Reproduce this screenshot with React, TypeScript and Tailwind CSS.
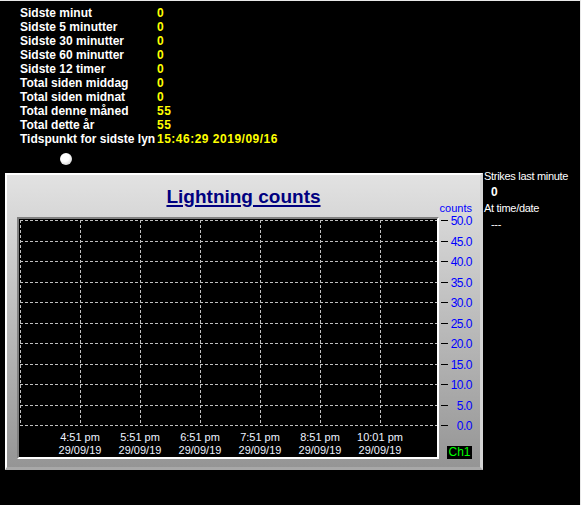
import React from "react";

const stats: [string, string][] = [
  ["Sidste minut", "0"],
  ["Sidste 5 minutter", "0"],
  ["Sidste 30 minutter", "0"],
  ["Sidste 60 minutter", "0"],
  ["Sidste 12 timer", "0"],
  ["Total siden middag", "0"],
  ["Total siden midnat", "0"],
  ["Total denne måned", "55"],
  ["Total dette år", "55"],
  ["Tidspunkt for sidste lyn", "15:46:29 2019/09/16"],
];

const times = ["4:51 pm", "5:51 pm", "6:51 pm", "7:51 pm", "8:51 pm", "10:01 pm"];
const yLabels = ["50.0", "45.0", "40.0", "35.0", "30.0", "25.0", "20.0", "15.0", "10.0", "5.0", "0.0"];

function Grid() {
  const h = Array.from({ length: 11 }, (_, i) => Math.round(1 + 20.5 * i) + 0.5);
  const v = Array.from({ length: 7 }, (_, j) => 1 + 60 * j + 0.5);
  return (
    <svg width={418} height={238} className="block">
      {h.map((y, i) => (
        <line key={"h" + i} x1={1} x2={418} y1={y} y2={y} stroke="#c0c0c0" strokeWidth={1} strokeDasharray="3 2" />
      ))}
      {v.map((x, j) => (
        <line key={"v" + j} x1={x} x2={x} y1={1} y2={207} stroke="#c0c0c0" strokeWidth={1} strokeDasharray="3 2" />
      ))}
      {times.map((t, k) => (
        <g key={t} fontFamily="'Liberation Sans', Arial, sans-serif" fontSize={11} fill="#eef2ff" textAnchor="middle">
          <text x={61 + 60 * k} y={222}>{t}</text>
          <text x={61 + 60 * k} y={235}>29/09/19</text>
        </g>
      ))}
    </svg>
  );
}

function Axis() {
  return (
    <svg width={41} height={259} className="block overflow-visible">
      <text x={33} y={3.7} fontFamily="'Liberation Sans', Arial, sans-serif" fontSize={11} fill="#0000ff" textAnchor="end">
        counts
      </text>
      {yLabels.map((l, i) => {
        const y = Math.round(12 + 20.5 * i) + 0.5;
        return (
          <g key={l}>
            <line x1={2} x2={9} y1={y} y2={y} stroke="#000" strokeWidth={1} />
            <text
              x={33}
              y={y + 4.6}
              fontFamily="'Liberation Sans', Arial, sans-serif"
              fontSize={12}
              letterSpacing={-0.5}
              fill="#0000ff"
              textAnchor="end"
            >
              {l}
            </text>
          </g>
        );
      })}
      <rect x={8} y={238} width={25} height={13} fill="#000" />
      <text x={20.5} y={248.3} fontFamily="'Liberation Sans', Arial, sans-serif" fontSize={12} fill="#00ff00" textAnchor="middle">
        Ch1
      </text>
    </svg>
  );
}

export default function App() {
  return (
    <div className="w-[581px] h-[505px] bg-[#e8e8e8] pt-[1px] overflow-hidden">
      <div className="w-[580px] h-[504px] bg-black pt-[5px] font-['Liberation_Sans',Arial,sans-serif]">
        <div className="pl-[20px] flex flex-col">
          {stats.map(([label, value]) => (
            <div key={label} className="flex text-[12px] leading-[14px] font-bold">
              <span className="w-[137px] text-white">{label}</span>
              <span className="text-[#ffff00] tracking-[0.5px]">{value}</span>
            </div>
          ))}
        </div>
        <div className="ml-[60px] mt-[7px] mb-[8px] w-[12px] h-[12px] rounded-full bg-[radial-gradient(circle_at_40%_35%,#ffffff_40%,#bdbdbd)]" />
        <div className="flex items-start">
          <div className="ml-[5px] w-[478px] h-[297px] border-t-2 border-l-2 border-t-white border-l-white border-r-[3px] border-b-[3px] border-r-[#d4d4d4] border-b-[#a8a8a8] bg-[linear-gradient(to_bottom,#e2e2e2,#959595)] flex flex-col">
            <div className="pt-[11px] text-center leading-[22px] text-[19px] font-bold text-[#000080] underline underline-offset-[2px] decoration-[1.5px]">
              Lightning counts
            </div>
            <div className="flex items-start">
              <div className="ml-[10px] mt-[9px] w-[422px] h-[242px] border-2 border-t-[#808080] border-l-[#808080] border-r-white border-b-white bg-black">
                <Grid />
              </div>
              <Axis />
            </div>
          </div>
          <div className="ml-[1px] -mt-[5px] flex flex-col text-white text-[11px] leading-[16px] tracking-[-0.3px]">
            <span>Strikes last minute</span>
            <span className="pl-[7px] font-bold text-[12px]">0</span>
            <span>At time/date</span>
            <span className="pl-[7px]">---</span>
          </div>
        </div>
      </div>
    </div>
  );
}
